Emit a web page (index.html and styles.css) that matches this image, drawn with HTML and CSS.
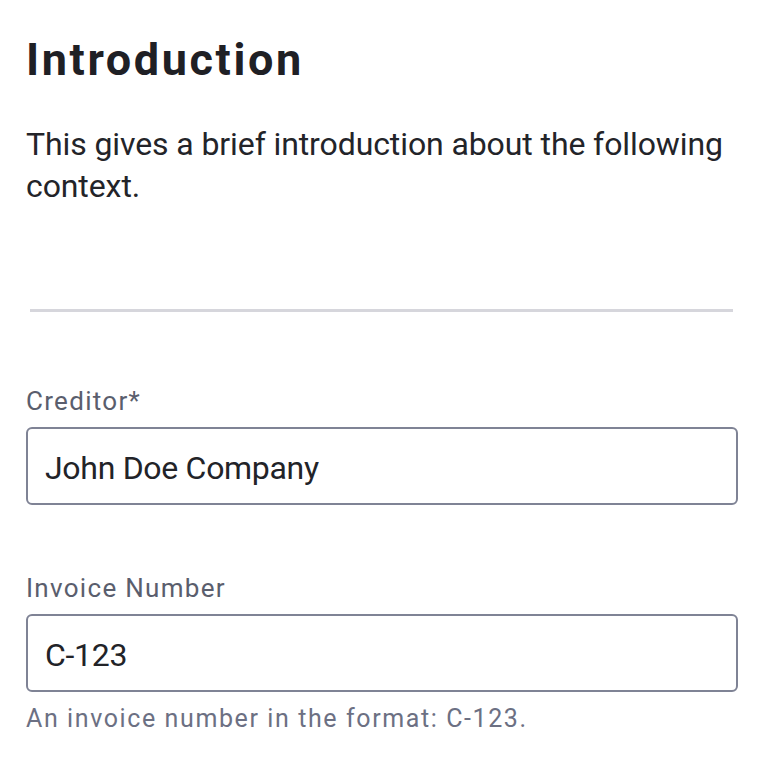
FILE: index.html
```html
<!DOCTYPE html>
<html lang="en">
<head>
<meta charset="utf-8">
<title>Introduction</title>
<link rel="stylesheet" href="styles.css">
</head>
<body>
<main class="page">
  <section class="intro">
    <h1 class="title">Introduction</h1>
    <p class="lead">This gives a brief introduction about the following context.</p>
  </section>
  <hr class="divider">
  <form class="form">
    <div class="field">
      <label class="label" for="creditor">Creditor*</label>
      <input class="input" id="creditor" type="text" value="John Doe Company">
    </div>
    <div class="field">
      <label class="label" for="invoice">Invoice Number</label>
      <input class="input" id="invoice" type="text" value="C-123">
      <p class="helper">An invoice number in the format: C-123.</p>
    </div>
  </form>
</main>
</body>
</html>
```

FILE: styles.css
```css
* { box-sizing: border-box; }
html, body { margin: 0; padding: 0; background: #ffffff; }
body { font-family: Roboto, "Liberation Sans", sans-serif; color: #222328; }

.page {
  width: 778px;
  padding: 34px 40px 0 26px;
}

.title {
  margin: 0;
  font-size: 45px;
  line-height: 52px;
  font-weight: 700;
  letter-spacing: 2.6px;
  color: #1f2025;
}

.lead {
  margin: 37px 0 0;
  font-size: 32px;
  line-height: 42px;
  font-weight: 400;
  letter-spacing: -0.1px;
  color: #232429;
}

.divider {
  margin: 102px 5px 0 4px;
  height: 3px;
  border: 0;
  background: #d6d6dc;
}

.form {
  display: flex;
  flex-direction: column;
  gap: 67px;
  margin-top: 73px;
}

.field {
  display: flex;
  flex-direction: column;
}

.label {
  font-size: 26px;
  line-height: 32px;
  letter-spacing: 1.3px;
  color: #5a5e6d;
  margin-bottom: 10px;
}

.input {
  width: 712px;
  height: 78px;
  margin: 0;
  padding: 4px 17px 0;
  border: 2px solid #7f8395;
  border-radius: 6px;
  font-family: Roboto, "Liberation Sans", sans-serif;
  font-size: 32px;
  line-height: 70px;
  letter-spacing: -0.3px;
  color: #222328;
  background: #ffffff;
  outline: none;
}

.helper {
  margin: 11px 0 0;
  font-size: 25px;
  line-height: 32px;
  letter-spacing: 1.6px;
  color: #6c7083;
}
```
